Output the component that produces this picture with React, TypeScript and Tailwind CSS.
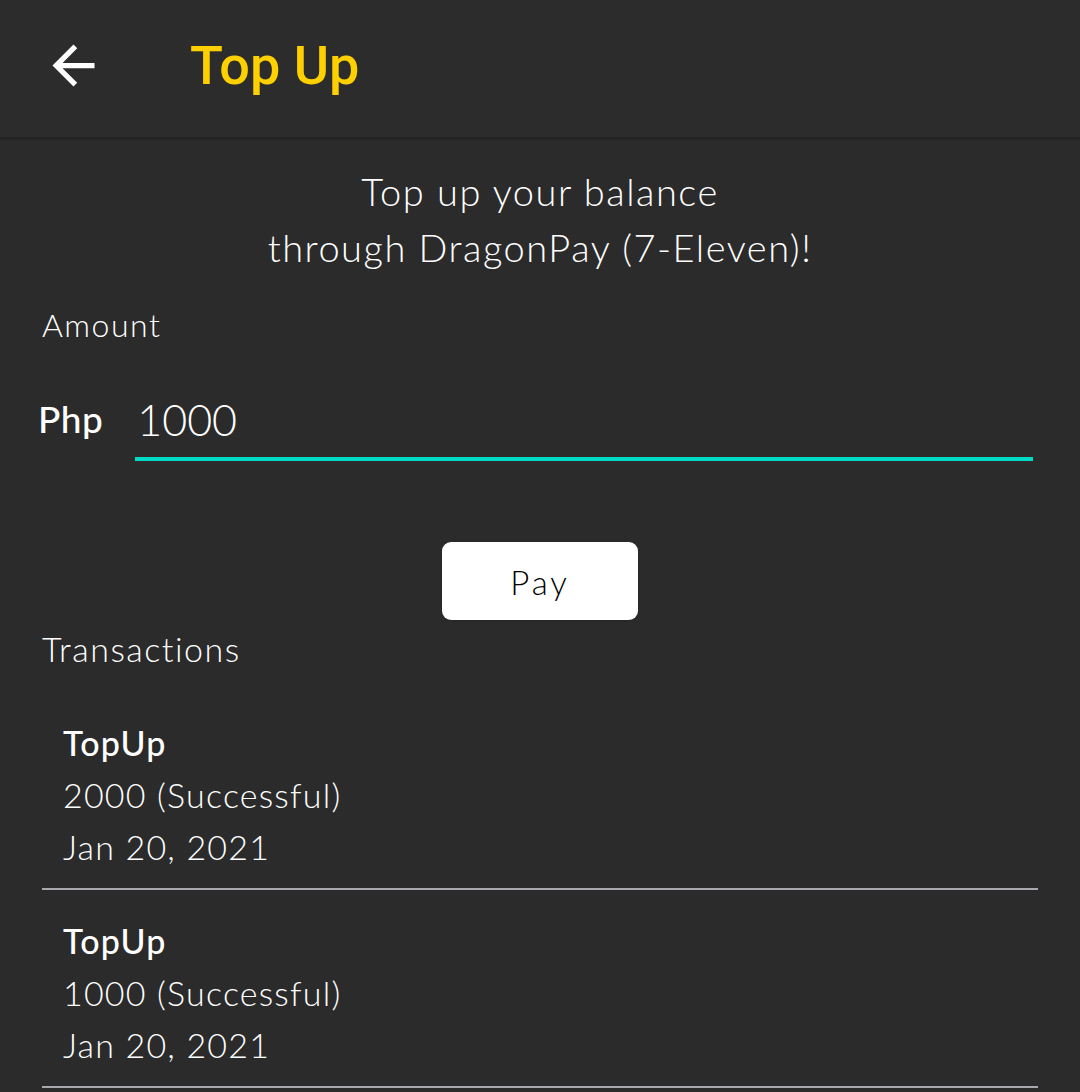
interface Transaction {
  type: string;
  amount: number;
  status: string;
  date: string;
}

const transactions: Transaction[] = [
  { type: "TopUp", amount: 2000, status: "Successful", date: "Jan 20, 2021" },
  { type: "TopUp", amount: 1000, status: "Successful", date: "Jan 20, 2021" },
];

const body = "font-['Lato','Noto_Sans',sans-serif]";

function BackArrow() {
  return (
    <svg width="63" height="63" viewBox="0 0 24 24" fill="currentColor">
      <path d="M20 11H7.83l5.59-5.59L12 4l-8 8 8 8 1.41-1.41L7.83 13H20v-2z" />
    </svg>
  );
}

export default function App() {
  return (
    <div className={`min-h-[1092px] w-[1080px] bg-[#2b2b2b] text-white ${body}`}>
      {/* Toolbar */}
      <header className="flex h-[137px] items-center bg-[#2c2c2c] pb-[6px] shadow-[0_2px_3px_rgba(0,0,0,0.25)]">
        <button className="ml-[42px] flex h-[63px] w-[63px] items-center justify-center text-white">
          <BackArrow />
        </button>
        <h1 className="ml-[85px] font-['Roboto',sans-serif] text-[54px] font-medium leading-none text-[#ffd000]">
          Top Up
        </h1>
      </header>

      <main className="px-[42px]">
        <p className="mt-[26px] text-center text-[38px] font-light leading-[56px] tracking-[1.5px]">
          Top up your balance
          <br />
          through DragonPay (7-Eleven)!
        </p>

        <div className="mt-[34px] text-[32px] font-light leading-none tracking-[1.5px]">Amount</div>

        <div className="mt-[57px] flex items-end">
          <span className="mb-[24px] ml-[-4px] text-[37px] font-medium leading-none tracking-[0.5px]">Php</span>
          <div className="ml-[32px] flex-1 pr-[5px]">
            <div className="pb-[16px] pl-[2px] text-[43px] font-light leading-none">1000</div>
            <div className="h-[4px] bg-[#03dac5]" />
          </div>
        </div>

        <div className="mt-[81px] flex justify-center">
          <button className="h-[78px] w-[196px] rounded-[9px] bg-white pt-[4px] text-[33px] font-light tracking-[3px] text-black shadow">
            Pay
          </button>
        </div>

        <div className="mt-[0px] text-[34px] font-light leading-[58px] tracking-[1.5px]">Transactions</div>

        <div className="mt-[14px]">
          {transactions.map((t, i) => (
            <div key={i} className="border-b-2 border-[#a8a8ac]">
              <div className="px-[21px] pb-[15px] pt-[25px] text-[34px] leading-[52px] tracking-[1.2px]">
                <div className="font-medium">{t.type}</div>
                <div className="font-light">
                  {t.amount} ({t.status})
                </div>
                <div className="font-light">{t.date}</div>
              </div>
            </div>
          ))}
        </div>
      </main>
    </div>
  );
}
